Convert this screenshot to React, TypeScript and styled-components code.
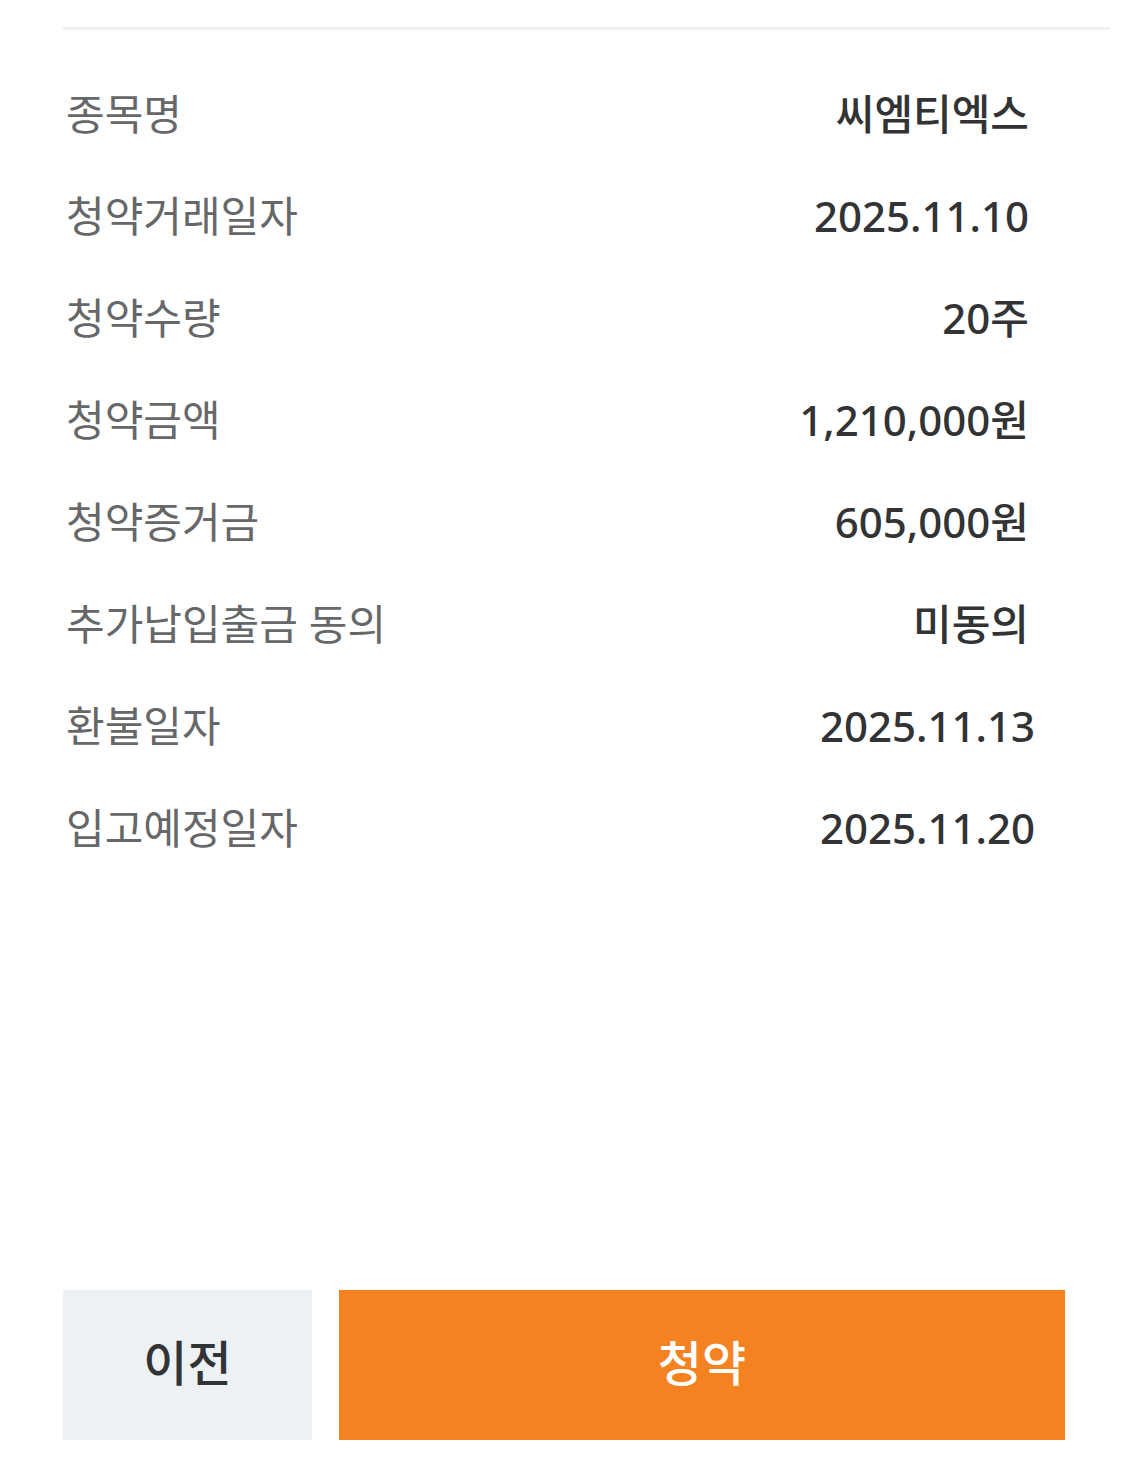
import React from "react";
import styled, { createGlobalStyle } from "styled-components";

const GlobalStyle = createGlobalStyle`
  *, *::before, *::after { box-sizing: border-box; }
  body {
    margin: 0;
    background: #fff;
    font-family: "Noto Sans", "Noto Sans CJK KR", sans-serif;
  }
`;

const Screen = styled.main`
  display: flex;
  flex-direction: column;
  min-height: 100vh;
  padding: 27px 0;
`;

const Divider = styled.hr`
  height: 3px;
  margin: 0 15px 33px 63px;
  border: 0;
  background: #f2f2f6;
`;

const Details = styled.dl<{ $inset: number }>`
  margin: 0 ${(p) => p.$inset}px 0 66px;
`;

const Row = styled.div`
  display: flex;
  align-items: center;
  justify-content: space-between;
  height: 102px;
  font-size: 42px;
  line-height: 60px;
`;

const Label = styled.dt`
  color: #666769;
`;

const Value = styled.dd`
  margin: 0;
  color: #323335;
  font-weight: 500;
`;

const Actions = styled.footer`
  display: grid;
  grid-template-columns: 249px 1fr;
  gap: 27px;
  margin: auto 60px 0 63px;
`;

const ActionButton = styled.button<{ $primary?: boolean }>`
  height: 150px;
  padding: 0 0 4px;
  border: 0;
  background: ${(p) => (p.$primary ? "#f58220" : "#edf1f4")};
  color: ${(p) => (p.$primary ? "#fff" : "#323335")};
  font-family: inherit;
  font-size: 48px;
  font-weight: 500;
  line-height: 72px;
  cursor: pointer;
`;

const subscription = [
  { label: "종목명", value: "씨엠티엑스" },
  { label: "청약거래일자", value: "2025.11.10" },
  { label: "청약수량", value: "20주" },
  { label: "청약금액", value: "1,210,000원" },
  { label: "청약증거금", value: "605,000원" },
  { label: "추가납입출금 동의", value: "미동의" },
];

const schedule = [
  { label: "환불일자", value: "2025.11.13" },
  { label: "입고예정일자", value: "2025.11.20" },
];

function DetailList({ items, inset }: { items: typeof subscription; inset: number }) {
  return (
    <Details $inset={inset}>
      {items.map(({ label, value }) => (
        <Row key={label}>
          <Label>{label}</Label>
          <Value>{value}</Value>
        </Row>
      ))}
    </Details>
  );
}

export default function App() {
  return (
    <Screen lang="ko">
      <GlobalStyle />
      <Divider />
      <DetailList items={subscription} inset={96} />
      <DetailList items={schedule} inset={90} />
      <Actions>
        <ActionButton type="button">이전</ActionButton>
        <ActionButton type="button" $primary>
          청약
        </ActionButton>
      </Actions>
    </Screen>
  );
}
